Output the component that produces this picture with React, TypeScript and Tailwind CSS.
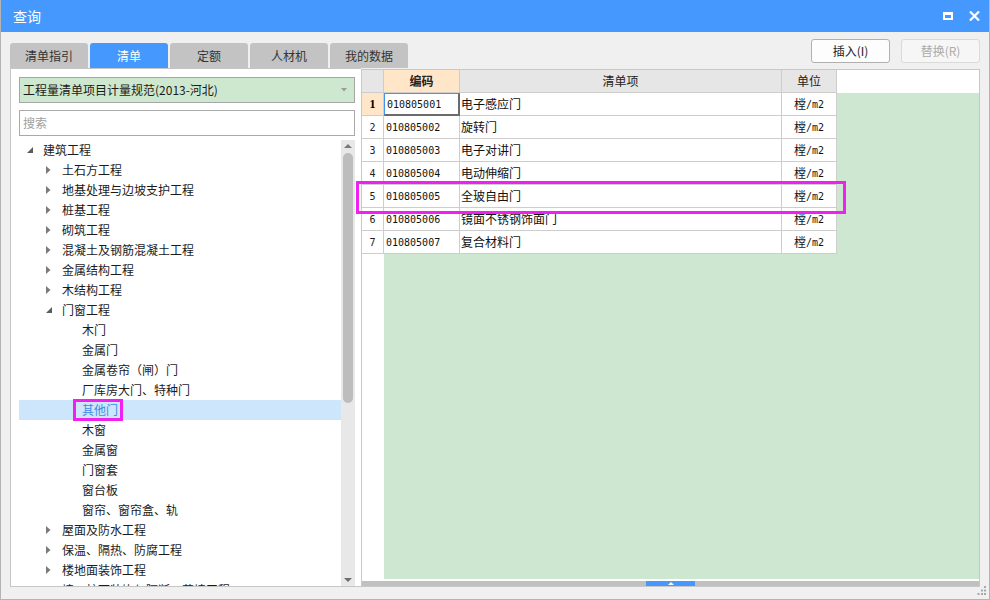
import React from 'react';

type Node = { t: string; l: 0 | 1 | 2; s?: 'open' | 'closed'; sel?: boolean };

const tree: Node[] = [
  { t: '建筑工程', l: 0, s: 'open' },
  { t: '土石方工程', l: 1, s: 'closed' },
  { t: '地基处理与边坡支护工程', l: 1, s: 'closed' },
  { t: '桩基工程', l: 1, s: 'closed' },
  { t: '砌筑工程', l: 1, s: 'closed' },
  { t: '混凝土及钢筋混凝土工程', l: 1, s: 'closed' },
  { t: '金属结构工程', l: 1, s: 'closed' },
  { t: '木结构工程', l: 1, s: 'closed' },
  { t: '门窗工程', l: 1, s: 'open' },
  { t: '木门', l: 2 },
  { t: '金属门', l: 2 },
  { t: '金属卷帘（闸）门', l: 2 },
  { t: '厂库房大门、特种门', l: 2 },
  { t: '其他门', l: 2, sel: true },
  { t: '木窗', l: 2 },
  { t: '金属窗', l: 2 },
  { t: '门窗套', l: 2 },
  { t: '窗台板', l: 2 },
  { t: '窗帘、窗帘盒、轨', l: 2 },
  { t: '屋面及防水工程', l: 1, s: 'closed' },
  { t: '保温、隔热、防腐工程', l: 1, s: 'closed' },
  { t: '楼地面装饰工程', l: 1, s: 'closed' },
  { t: '墙、柱面装饰与隔断、幕墙工程', l: 1, s: 'closed' },
];

const rows = [
  ['010805001', '电子感应门'],
  ['010805002', '旋转门'],
  ['010805003', '电子对讲门'],
  ['010805004', '电动伸缩门'],
  ['010805005', '全玻自由门'],
  ['010805006', '镜面不锈钢饰面门'],
  ['010805007', '复合材料门'],
];

const tabs = ['清单指引', '清单', '定额', '人材机', '我的数据'];

const indent = ['pl-[8px]', 'pl-[27px]', 'pl-[47px]'];

function Arrow({ s }: { s?: 'open' | 'closed' }) {
  if (s === 'closed')
    return (
      <svg width="5" height="8" viewBox="0 0 5 8">
        <polygon points="0,0 4.5,4 0,8" fill="#7a7a7a" />
      </svg>
    );
  if (s === 'open')
    return (
      <svg width="6" height="6" viewBox="0 0 6 6">
        <polygon points="6,0 6,6 0,6" fill="#5c5c5c" />
      </svg>
    );
  return null;
}

function TreeRow({ n }: { n: Node }) {
  return (
    <div
      className={`flex items-center h-[20px] shrink-0 whitespace-nowrap ${indent[n.l]} ${
        n.sel ? 'bg-[#cde6fb] text-[#3d8de3]' : 'text-[#1b1b1b]'
      }`}
    >
      <div className="w-[16px] flex items-center">
        <Arrow s={n.s} />
      </div>
      <span>{n.t}</span>
    </div>
  );
}

export default function App() {
  return (
    <div className="relative w-[990px] h-[600px] flex flex-col bg-[#f0f0f0] border-x border-b border-[#b4b4b4] overflow-hidden text-[12px] font-['Noto_Sans_CJK_SC','Microsoft_YaHei',sans-serif]">
      {/* title bar */}
      <div className="h-[32px] shrink-0 bg-[#4599fe] flex items-center justify-between pl-[12px] pr-[9px]">
        <span className="text-white text-[14px]">查询</span>
        <div className="flex items-center gap-[16px]">
          <div className="w-[10px] h-[8px] border-2 border-t-[3px] border-white" />
          <svg width="11" height="10" viewBox="0 0 11 10">
            <path d="M1 0.5 L10 9.5 M10 0.5 L1 9.5" stroke="white" strokeWidth="2.2" />
          </svg>
        </div>
      </div>

      {/* body */}
      <div className="flex-1 min-h-0 flex flex-col pl-[9px] pr-[9px] pb-[12px]">
        <div className="h-[36px] shrink-0 flex">
          <div className="flex items-end gap-[2px]">
            {tabs.map((t, i) => (
              <div
                key={t}
                className={`w-[78px] h-[25px] rounded-t-[3px] flex items-center justify-center ${
                  i === 1 ? 'bg-[#4599fe] text-white' : 'bg-[#c3c3c3] text-[#333]'
                }`}
              >
                {t}
              </div>
            ))}
          </div>
          <div className="ml-auto mt-[7px] flex gap-[11px] self-start">
            <button className="w-[79px] h-[24px] rounded-[3px] border border-[#b0b0b0] bg-[#fdfdfd] text-[#222]">
              插入(I)
            </button>
            <button className="w-[79px] h-[24px] rounded-[3px] border border-[#dadada] bg-[#f6f6f6] text-[#ababab]">
              替换(R)
            </button>
          </div>
        </div>

        <div className="flex-1 flex min-h-0">
          {/* left panel */}
          <div className="w-[351px] shrink-0 min-h-0 bg-white border-l border-t border-b border-[#c6c6c6] flex flex-col pl-[8px] pr-[6px] pt-[8px]">
            <div className="h-[26px] w-[336px] shrink-0 bg-[#cde8cf] border border-[#a6a6a6] flex items-center pl-[3px] pr-[7px] text-[#1b1b1b]">
              <span>工程量清单项目计量规范(2013-河北)</span>
              <svg className="ml-auto" width="6" height="4" viewBox="0 0 6 4">
                <polygon points="0,0 6,0 3,3.5" fill="#9a9a9a" />
              </svg>
            </div>
            <div className="mt-[7px] h-[26px] w-[336px] shrink-0 border border-[#a9a9a9] flex items-center pl-[3px] text-[#a0a0a0]">
              搜索
            </div>
            <div className="mt-[4px] flex-1 flex min-h-0 overflow-hidden">
              <div className="w-[322px] flex flex-col overflow-hidden">
                {tree.map((n) => (
                  <TreeRow key={n.t} n={n} />
                ))}
              </div>
              <div className="w-[14px] bg-[#e8e8e8] flex flex-col items-center">
                <svg className="mt-[4px] shrink-0" width="8" height="4" viewBox="0 0 8 4">
                  <polygon points="0,4 8,4 4,0" fill="#7a7a7a" />
                </svg>
                <div className="mt-[5px] shrink-0 w-[10px] h-[250px] rounded-full bg-[#bdbdbd]" />
                <svg className="mt-auto mb-[4px] shrink-0" width="8" height="4" viewBox="0 0 8 4">
                  <polygon points="0,0 8,0 4,4" fill="#6e6e6e" />
                </svg>
              </div>
            </div>
          </div>

          {/* grid */}
          <div className="flex-1 mt-[1px] bg-white border border-[#c8c8c8] flex flex-col min-w-0">
            <div className="h-[23px] shrink-0 flex">
              <div className="w-[22px] bg-[#e6e6e6] border-r border-b border-[#cdcdcd]" />
              <div className="w-[76px] bg-[#ffe6c8] border-r border-b border-[#cdcdcd] flex items-center justify-center font-bold text-[#222]">
                编码
              </div>
              <div className="w-[322px] bg-[#e6e6e6] border-r border-b border-[#cdcdcd] flex items-center justify-center text-[#222]">
                清单项
              </div>
              <div className="w-[55px] bg-[#e6e6e6] border-r border-b border-[#cdcdcd] flex items-center justify-center text-[#222]">
                单位
              </div>
              <div className="flex-1 bg-white" />
            </div>
            <div className="flex-1 flex min-h-0">
              <div className="w-[22px] shrink-0 bg-white flex flex-col">
                {rows.map((r, i) => (
                  <div
                    key={r[0]}
                    className={`h-[23px] shrink-0 border-r border-b border-[#cdcdcd] flex items-center justify-center ${
                      i === 0
                        ? "bg-[#ffe6c8] font-bold font-['Liberation_Serif',serif] text-[12px]"
                        : "font-['DejaVu_Sans_Mono',monospace] text-[10px] text-[#222]"
                    }`}
                  >
                    {i + 1}
                  </div>
                ))}
              </div>
              <div className="flex-1 bg-[#cde7d0] flex flex-col">
                {rows.map((r, i) => (
                  <div key={r[0]} className="h-[23px] shrink-0 flex">
                    <div
                      className={`w-[76px] bg-white flex items-center pl-[2px] font-['DejaVu_Sans_Mono',monospace] text-[10px] text-[#111] ${
                        i === 0
                          ? 'border-t border-l border-[#3d95f5] border-r-2 border-b-2 border-r-[#6b6b6b] border-b-[#6b6b6b]'
                          : 'border-r border-b border-[#cdcdcd]'
                      }`}
                    >
                      {r[0]}
                    </div>
                    <div className="w-[322px] bg-white border-r border-b border-[#cdcdcd] flex items-center pl-[1px] text-[#111]">
                      {r[1]}
                    </div>
                    <div className="w-[55px] bg-white border-r border-b border-[#cdcdcd] flex items-center justify-center text-[#111]">
                      樘<span className="font-['DejaVu_Sans_Mono',monospace] text-[10px]">/m2</span>
                    </div>
                  </div>
                ))}
              </div>
            </div>
            <div className="h-[2px] shrink-0 bg-white" />
            <div className="h-[5px] shrink-0 bg-[#c0c0c0] flex">
              <div className="ml-[284px] w-[49px] bg-[#4599fe] flex items-center justify-center">
                <svg width="6" height="3" viewBox="0 0 6 3">
                  <polygon points="0,3 6,3 3,0" fill="white" />
                </svg>
              </div>
            </div>
          </div>
        </div>
      </div>

      {/* resize grip */}
      <svg className="absolute right-[2px] bottom-[3px]" width="10" height="10" viewBox="0 0 10 10">
        <rect x="7" y="0" width="2" height="2" fill="#a8a8a8" />
        <rect x="4" y="3.5" width="2" height="2" fill="#a8a8a8" />
        <rect x="7" y="3.5" width="2" height="2" fill="#a8a8a8" />
        <rect x="0.5" y="7" width="2" height="2" fill="#a8a8a8" />
        <rect x="4" y="7" width="2" height="2" fill="#a8a8a8" />
        <rect x="7" y="7" width="2" height="2" fill="#a8a8a8" />
      </svg>

      {/* annotation boxes */}
      <div className="absolute left-[355px] top-[181px] w-[490px] h-[33px] border-[3px] border-[#f020f0]" />
      <div className="absolute left-[72px] top-[399px] w-[50px] h-[22px] border-[3px] border-[#f020f0]" />
    </div>
  );
}
